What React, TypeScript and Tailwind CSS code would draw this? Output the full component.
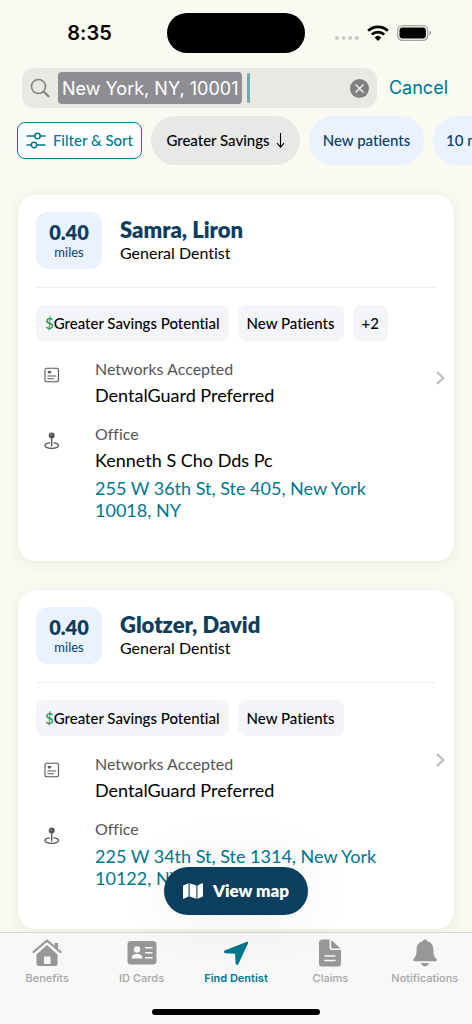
import { useState, type FC, type ReactNode } from "react";
import { FaMap } from "react-icons/fa";

interface Dentist {
  id: string;
  distance: string;
  name: string;
  specialty: string;
  tags: string[];
  extraTags?: number;
  network: string;
  office?: string;
  address: string[];
}

interface Tab {
  id: string;
  label: string;
  icon: ReactNode;
}

const dentists: Dentist[] = [
  {
    id: "samra",
    distance: "0.40",
    name: "Samra, Liron",
    specialty: "General Dentist",
    tags: ["New Patients"],
    extraTags: 2,
    network: "DentalGuard Preferred",
    office: "Kenneth S Cho Dds Pc",
    address: ["255 W 36th St, Ste 405, New York", "10018, NY"],
  },
  {
    id: "glotzer",
    distance: "0.40",
    name: "Glotzer, David",
    specialty: "General Dentist",
    tags: ["New Patients"],
    network: "DentalGuard Preferred",
    address: ["225 W 34th St, Ste 1314, New York", "10122, NY"],
  },
];

const HomeIcon = () => (
  <svg width="30" height="28" viewBox="0 0 30 28" fill="currentColor">
    <path d="M15 6 25.5 15.500V25a2 2 0 0 1-2 2h-17a2 2 0 0 1-2-2V15.500Z" />
    <path d="M1.500 13 15 1.700 28.500 13" fill="none" stroke="#f8f8f8" strokeWidth="5" />
    <path d="M1.500 13 15 1.700 28.500 13" fill="none" stroke="currentColor" strokeWidth="2.200" strokeLinecap="round" strokeLinejoin="round" />
    <path d="M22.500 4H26V10l-3.500-3Z" />
    <path d="M12 17.500h6.500V25H12Z" fill="#f8f8f8" />
  </svg>
);

const IdCardIcon = () => (
  <svg width="30" height="28" viewBox="0 0 30 28" fill="currentColor">
    <rect x="0.500" y="2" width="29" height="23.500" rx="3.500" />
    <g fill="#f8f8f8">
      <circle cx="10" cy="10.500" r="3.200" />
      <path d="M4.500 19.500c.3-3 2-4.500 4-4.500h3c2 0 3.700 1.500 4 4.500Z" />
      <path d="M18 8h7.500v1.500H18Zm0 5h7.500v1.500H18Zm0 5h7.500v1.500H18Z" />
    </g>
  </svg>
);

const ArrowIcon = () => (
  <svg width="28" height="28" viewBox="0 0 28 28" fill="currentColor">
    <path d="M25 2.700 2.700 11.600c-1.200.6-.9 2.500.5 2.700L13 14.700l.6 9.700c.2 1.500 2.100 1.900 2.800.5L26.200 4c.3-.9-.3-1.600-1.200-1.300Z" />
  </svg>
);

const ClaimIcon = () => (
  <svg width="22" height="28" viewBox="0 0 22 28" fill="currentColor">
    <path d="M3.500.500H10.500V9a2 2 0 0 0 2 2H22V24.500a3 3 0 0 1-3 3H3a3 3 0 0 1-3-3V3.500a3 3 0 0 1 3.500-3Z" />
    <path d="M12.200.800 21.500 9.500h-8a1.300 1.300 0 0 1-1.300-1.300Z" />
    <path d="M6 17h10M6 21.500h10" stroke="#f8f8f8" strokeWidth="1.600" strokeLinecap="round" />
  </svg>
);

const BellIcon = () => (
  <svg width="26" height="28" viewBox="0 0 26 28" fill="currentColor">
    <path d="M13 .500c1.100 0 2 .7 2.200 1.700 3.900 1 6.200 4 6.200 8.300 0 5.600 1.200 7.400 2.900 9.200 1 1 .5 2.500-1 2.500H2.700c-1.500 0-2-1.500-1-2.500 1.700-1.800 2.900-3.600 2.900-9.200 0-4.300 2.300-7.300 6.200-8.300C11 1.200 11.900.500 13 .500Z" />
    <path d="M9 24h8c-.4 2-2 3.300-4 3.300S9.400 26 9 24Z" />
  </svg>
);

const tabs: Tab[] = [
  { id: "benefits", label: "Benefits", icon: <HomeIcon /> },
  { id: "cards", label: "ID Cards", icon: <IdCardIcon /> },
  { id: "find", label: "Find Dentist", icon: <ArrowIcon /> },
  { id: "claims", label: "Claims", icon: <ClaimIcon /> },
  { id: "notifications", label: "Notifications", icon: <BellIcon /> },
];

const StatusBar = () => (
  <div className="grid h-[68px] grid-cols-[1fr_138px_1fr] items-center pb-[2px]">
    <p className="pl-3 text-center font-[Inter] text-xl font-semibold">8:35</p>
    <div className="h-10 rounded-full bg-black" />
    <div className="flex items-center gap-2 pl-[30px]">
      <svg width="24" height="16" viewBox="0 0 24 16" fill="#c9c9c4">
        <circle cx="2" cy="13" r="2" />
        <circle cx="8.600" cy="13" r="2" />
        <circle cx="15.200" cy="13" r="2" />
        <circle cx="21.800" cy="13" r="2" />
      </svg>
      <svg width="22" height="16" viewBox="0 0 22 16" fill="none" stroke="#000" strokeWidth="2.800">
        <path d="M1.200 5.800a14 14 0 0 1 19.600 0" />
        <path d="M4.800 9.600a9 9 0 0 1 12.400 0" />
        <path d="M11 16 7.600 12.400a5 5 0 0 1 6.800 0Z" fill="#000" stroke="none" />
      </svg>
      <svg width="35" height="16" viewBox="0 0 35 16">
        <rect x="0.700" y="0.700" width="30" height="14.600" rx="4.700" fill="none" stroke="#a5a5a0" strokeWidth="1.300" />
        <rect x="2.500" y="2.500" width="26.400" height="11" rx="3" />
        <path d="M32.300 5.500c2.300.8 2.300 4.200 0 5Z" fill="#a5a5a0" />
      </svg>
    </div>
  </div>
);

const SearchBar = () => {
  const [query, setQuery] = useState<string>("New York, NY, 10001");

  return (
    <div className="flex items-center gap-3 pr-6 pl-[22px] font-[Inter]">
      <div className="flex h-10 min-w-0 flex-1 items-center rounded-xl bg-[#e9e8e3] px-2">
        <svg width="20" height="20" viewBox="0 0 20 20" fill="none" stroke="#828285" strokeLinecap="round">
          <circle cx="8.500" cy="8.500" r="7" strokeWidth="1.600" />
          <path d="m13.800 13.800 4.700 4.500" strokeWidth="2.200" />
        </svg>
        <input
          type="text"
          aria-label="Location"
          className="ml-2 h-8 min-w-0 rounded bg-[#8e8d92] px-[4px] text-lg text-white outline-none [field-sizing:content]"
          value={query}
          onChange={(e) => setQuery(e.target.value)}
        />
        <span className="ml-[5px] h-[30px] w-[3px] rounded-full bg-[#6faab8]" />
        <button aria-label="Clear" className="ml-auto" onClick={() => setQuery("")}>
          <svg width="19" height="19" viewBox="0 0 19 19">
            <circle cx="9.500" cy="9.500" r="9.500" fill="#808083" />
            <path d="m6 6 7 7m0-7-7 7" stroke="#e9e8e3" strokeWidth="1.700" strokeLinecap="round" />
          </svg>
        </button>
      </div>
      <button className="text-lg text-[#007790]">Cancel</button>
    </div>
  );
};

const Filters = () => (
  <div className="flex items-center gap-[9px] overflow-hidden pt-2 pl-[17px] text-[15px] font-medium whitespace-nowrap">
    <button className="flex h-[37px] w-[125px] shrink-0 items-center justify-between rounded-lg border border-[#007790] bg-white px-2 text-[#007790]">
      <svg width="20" height="17" viewBox="0 0 20 17" fill="none" stroke="currentColor" strokeWidth="1.500" strokeLinecap="round">
        <path d="M1 4h7.500M14.500 4H19M1 13h4M11 13h8" />
        <circle cx="11.500" cy="4" r="2.700" />
        <circle cx="8" cy="13" r="2.700" />
      </svg>
      Filter &amp; Sort
    </button>
    <button className="flex h-[49px] w-[149px] shrink-0 items-center justify-center gap-[6px] rounded-full bg-[#e8e8e6]">
      Greater Savings
      <svg width="9" height="15" viewBox="0 0 9 15" fill="none" stroke="currentColor" strokeWidth="1.100">
        <path d="M4.500 0v14M1 10.200l3.500 3.900L8 10.200" />
      </svg>
    </button>
    <button className="h-[49px] w-[115px] shrink-0 rounded-full bg-[#eaf1ff] text-[#0c3e5d]">New patients</button>
    <button className="h-[49px] w-[100px] shrink-0 rounded-full bg-[#eaf1ff] pl-[13px] text-left text-[#0c3e5d]">10 miles</button>
  </div>
);

const NetworkIcon = () => (
  <svg width="16" height="16" viewBox="0 0 16 16" fill="none" stroke="#555" strokeWidth="1.100" strokeLinecap="round">
    <rect x="1" y="1.300" width="13.500" height="13.500" rx="1.700" />
    <path d="M3.800 9h8M3.800 11.700h5.700" />
    <path d="M5.500 6.900 3.800 5.200c-.6-1.400 1.100-1.900 1.700-.8.600-1.100 2.300-.6 1.700.8Z" fill="#555" stroke="none" />
  </svg>
);

const OfficeIcon = () => (
  <svg width="16" height="18" viewBox="0 0 16 18" fill="none" stroke="#555" strokeWidth="1.300" strokeLinecap="round">
    <circle cx="7.700" cy="3.500" r="3" fill="#555" stroke="none" />
    <circle cx="7" cy="2.700" r="0.700" fill="#bbb" stroke="none" />
    <path d="M7.700 6v8" />
    <path d="M5.500 10.900C2.700 11.200 1 12.200 1 13.500c0 1.600 3 2.800 6.700 2.800s6.700-1.200 6.700-2.800c0-1.300-1.700-2.300-4.500-2.600" />
  </svg>
);

const DetailRow: FC<{ icon: ReactNode; label: string; children: ReactNode }> = ({ icon, label, children }) => (
  <div className="flex text-lg">
    <div className="w-[59px] shrink-0 pt-[10px] pl-2">{icon}</div>
    <div>
      <p className="text-base leading-6 text-[#555]">{label}</p>
      {children}
    </div>
  </div>
);

const DentistCard: FC<{ dentist: Dentist }> = ({ dentist }) => (
  <article className="flex items-center rounded-[18px] bg-white pr-[9px] pl-[18px] shadow-[0_2px_14px_rgba(90,90,50,0.10)]">
    <div className="min-w-0 flex-1 pt-[17px] pb-10">
      <header className="flex items-center gap-[18px] border-b border-[#f0efe4] pb-[18px]">
        <div className="flex h-[57px] w-[66px] flex-col items-center justify-center rounded-xl bg-[#eaf1ff] text-[#0c3e5d]">
          <span className="text-xl leading-[22px] font-extrabold">{dentist.distance}</span>
          <span className="text-[13px] leading-[18px]">miles</span>
        </div>
        <div>
          <h2 className="text-[22px] leading-6 font-extrabold text-[#0c3e5d]">{dentist.name}</h2>
          <p className="text-base leading-[22px]">{dentist.specialty}</p>
        </div>
      </header>

      <ul className="mt-[17px] flex gap-[9px] text-[15px] leading-9 font-medium whitespace-nowrap">
        <li className="rounded-lg bg-[#f4f5f8] px-[9px]">
          <span className="text-[#159a5b]">$</span>Greater Savings Potential
        </li>
        {dentist.tags.map((tag) => (
          <li key={tag} className="rounded-lg bg-[#f4f5f8] px-[9px]">
            {tag}
          </li>
        ))}
        {dentist.extraTags && <li className="rounded-lg bg-[#f4f5f8] px-[9px]">+{dentist.extraTags}</li>}
      </ul>

      <div className="mt-4 flex flex-col gap-[14px]">
        <DetailRow icon={<NetworkIcon />} label="Networks Accepted">
          <p className="mt-px leading-[26px]">{dentist.network}</p>
        </DetailRow>
        <DetailRow icon={<OfficeIcon />} label="Office">
          {dentist.office && <p className="mt-px leading-[26px]">{dentist.office}</p>}
          <a href="#map" className="mt-1 block leading-[22px] text-[#007790]">
            {dentist.address.map((line) => (
              <span key={line} className="block">
                {line}
              </span>
            ))}
          </a>
        </DetailRow>
      </div>
    </div>
    <svg width="9" height="14" viewBox="0 0 9 14" fill="none" stroke="#bdbdbd" strokeWidth="2.200">
      <path d="m1 1 6.300 6L1 13" />
    </svg>
  </article>
);

const TabBar: FC<{ active: string; onSelect: (id: string) => void }> = ({ active, onSelect }) => (
  <nav className="border-t border-[#d5d5cf] bg-[#f8f8f8] pb-[9px] font-[Inter]">
    <div className="grid grid-cols-5">
      {tabs.map((tab) => (
        <button
          key={tab.id}
          onClick={() => onSelect(tab.id)}
          className={`flex flex-col items-center gap-[3px] pt-[6px] text-[11px] leading-4 ${
            active === tab.id ? "font-semibold text-[#007790]" : "font-medium text-[#969896]"
          }`}
        >
          {tab.icon}
          <span className={active === tab.id ? "" : "text-[#a5a5a5]"}>{tab.label}</span>
        </button>
      ))}
    </div>
    <div className="mx-auto mt-[23px] h-[6px] w-[168px] rounded-full bg-black" />
  </nav>
);

const App: FC = () => {
  const [activeTab, setActiveTab] = useState<string>("find");

  return (
    <div className="flex h-screen flex-col bg-[#fafaf2] font-[Lato,sans-serif] text-black [font-variant-ligatures:none]">
      <header>
        <StatusBar />
        <SearchBar />
        <Filters />
      </header>
      <div className="relative min-h-0 flex-1">
        <main className="flex h-full flex-col gap-[29px] overflow-y-auto px-[18px] pt-[30px] pb-1 [scrollbar-width:none]">
          {dentists.map((dentist) => (
            <DentistCard key={dentist.id} dentist={dentist} />
          ))}
        </main>
        <button className="absolute bottom-[17px] left-1/2 flex h-12 w-36 -translate-x-1/2 items-center justify-center gap-[10px] rounded-full bg-[#0c3e5d] text-[17px] font-extrabold whitespace-nowrap text-white shadow-[0_0_60px_rgba(0,0,0,0.08)]">
          <FaMap size={20} />
          View map
        </button>
      </div>
      <TabBar active={activeTab} onSelect={setActiveTab} />
    </div>
  );
};

export default App;
